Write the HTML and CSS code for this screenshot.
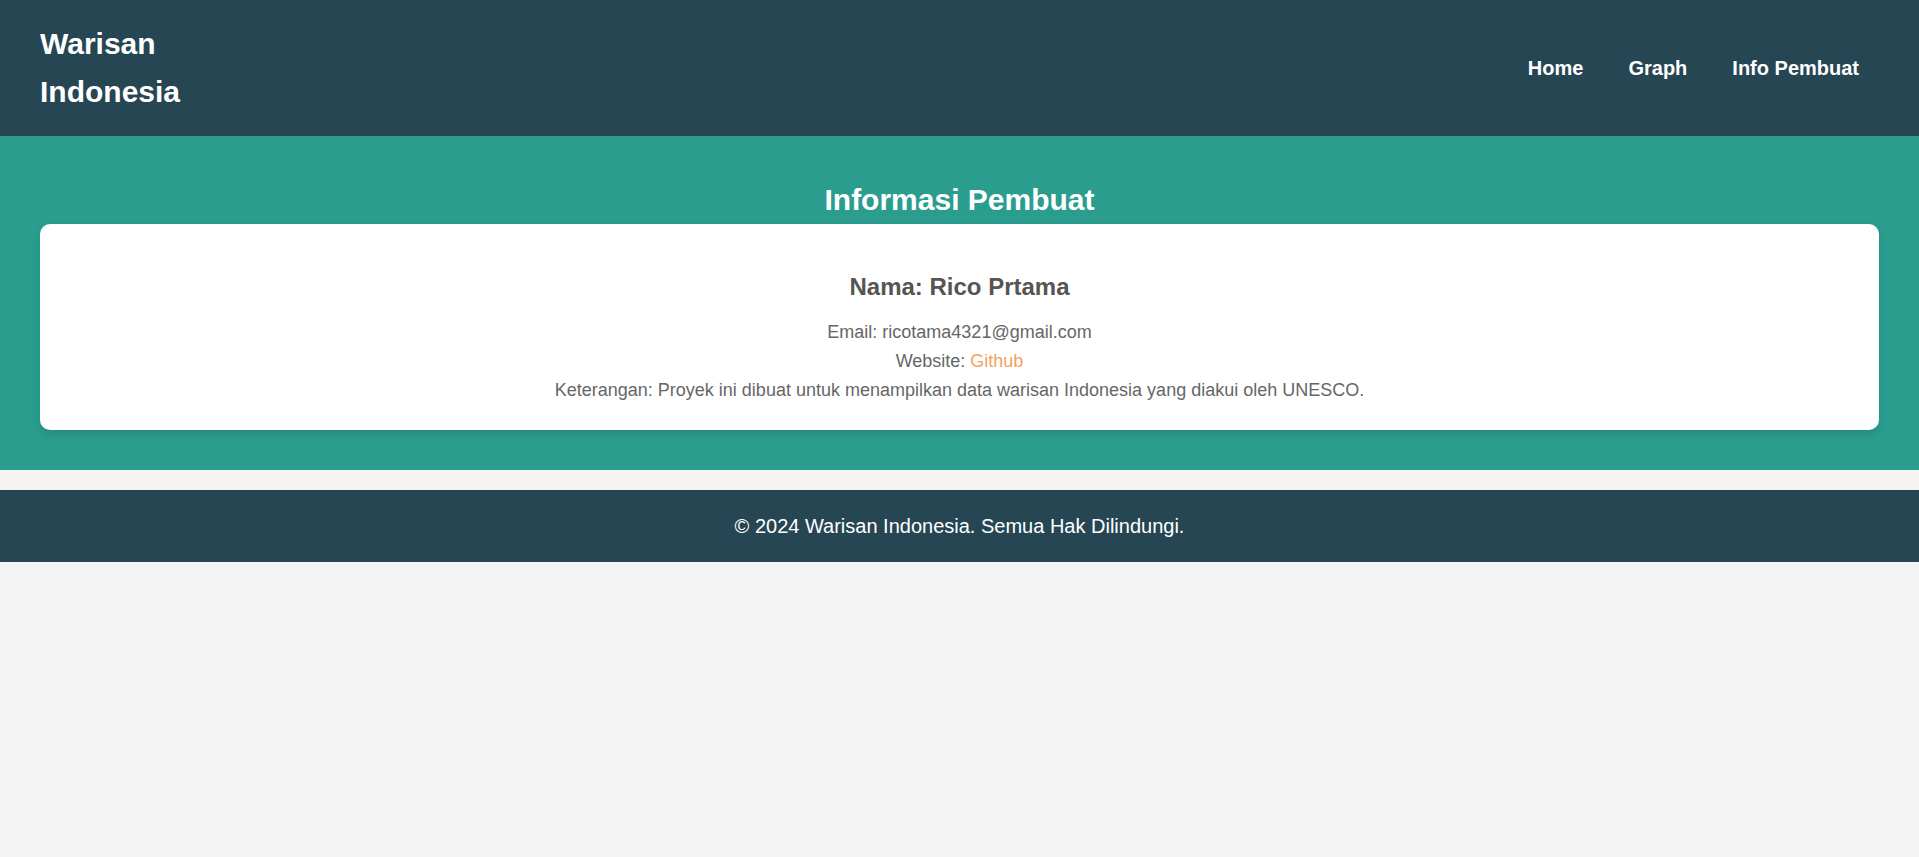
FILE: index.html
```html
<!DOCTYPE html>
<html lang="id">
<head>
<meta charset="utf-8">
<title>Info Pembuat - Warisan Indonesia</title>
<link rel="stylesheet" href="styles.css">
</head>
<body>
<header class="site-header">
  <h1 class="logo">Warisan Indonesia</h1>
  <nav class="nav">
    <a class="nav-link" href="#">Home</a>
    <a class="nav-link" href="#">Graph</a>
    <a class="nav-link" href="#">Info Pembuat</a>
  </nav>
</header>
<main class="info-section">
  <h2 class="section-title">Informasi Pembuat</h2>
  <div class="card">
    <h3 class="card-name">Nama: Rico Prtama</h3>
    <p class="card-line">Email: ricotama4321@gmail.com</p>
    <p class="card-line">Website: <a class="card-link" href="#">Github</a></p>
    <p class="card-line">Keterangan: Proyek ini dibuat untuk menampilkan data warisan Indonesia yang diakui oleh UNESCO.</p>
  </div>
</main>
<footer class="site-footer">
  <p class="footer-text">&copy; 2024 Warisan Indonesia. Semua Hak Dilindungi.</p>
</footer>
</body>
</html>
```
FILE: styles.css
```css
* {
  box-sizing: border-box;
}

body {
  margin: 0;
  background: #f4f4f4;
  font-family: "Liberation Sans", Arial, sans-serif;
  line-height: 1.6;
  color: #333;
}

.site-header {
  display: flex;
  justify-content: space-between;
  align-items: center;
  background: #264653;
  color: #fff;
  padding: 20px 40px;
}

.logo {
  margin: 0;
  width: 200px;
  font-size: 30px;
  font-weight: bold;
  line-height: 1.6;
}

.nav {
  display: flex;
  gap: 5px;
}

.nav-link {
  color: #fff;
  text-decoration: none;
  font-weight: bold;
  font-size: 20px;
  line-height: 32px;
  padding: 0 20px;
}

.info-section {
  background: #2a9d8f;
  padding: 40px;
  margin-bottom: 20px;
  text-align: center;
}

.section-title {
  margin: 0;
  color: #fff;
  font-size: 30px;
  line-height: 48px;
}

.card {
  background: #fff;
  border-radius: 10px;
  box-shadow: 0 4px 8px rgba(0, 0, 0, 0.12);
  padding: 20px 20px 25px;
}

.card-name {
  margin: 24px 0 12px;
  font-size: 24px;
  color: #555;
}

.card-line {
  margin: 0;
  font-size: 18px;
  color: #666;
}

.card-link {
  color: #f4a261;
  text-decoration: none;
}

.site-footer {
  background: #264653;
  color: #fff;
  text-align: center;
  padding: 20px;
}

.footer-text {
  margin: 0;
  font-size: 20px;
  line-height: 32px;
}
```
